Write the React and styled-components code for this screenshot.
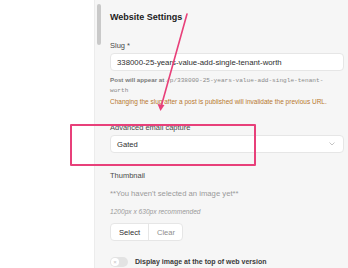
import React from "react";
import styled, { createGlobalStyle } from "styled-components";

const Global = createGlobalStyle`
  html, body { margin: 0; padding: 0; background: #ffffff; overflow: hidden; }
  body { font-family: "Liberation Sans", Arial, sans-serif; }
  * { box-sizing: border-box; }
`;

const Stage = styled.div`
  position: relative;
  width: 348px;
  height: 268px;
  overflow: hidden;
  display: flex;
  background: #ffffff;
`;

const Gutter = styled.div`
  width: 94px;
  flex: none;
`;

const Panel = styled.div`
  position: relative;
  flex: 1;
  background: #f6f6f6;
  border-left: 1px solid #ececec;
  padding: 10px 4px 0 15px;
  display: flex;
  flex-direction: column;
`;

const ScrollThumb = styled.div`
  position: absolute;
  left: 2px;
  top: 4px;
  width: 4px;
  height: 41px;
  border-radius: 2px;
  background: #c9c9c9;
`;

const Title = styled.div`
  font-size: 9px;
  line-height: 15px;
  font-weight: 700;
  color: #1c1c1c;
`;

const Label = styled.div`
  margin-top: ${(p) => p.$mt || 0}px;
  font-size: 7.5px;
  line-height: 12px;
  color: #4a4a4a;
`;

const Field = styled.div`
  margin-top: 1px;
  height: 19px;
  background: #ffffff;
  border: 1px solid #e6e6e6;
  border-radius: 4px;
  display: flex;
  align-items: center;
  justify-content: space-between;
  padding: 0 8px 0 6px;
  font-size: ${(p) => p.$size || 7.6}px;
  color: #2e2e2e;
`;

const Help = styled.div`
  margin-top: 3.5px;
  font-size: 6.2px;
  line-height: 9px;
  font-weight: 700;
  color: #7a7a7a;
`;

const Mono = styled.span`
  font-family: "Liberation Mono", "DejaVu Sans Mono", monospace;
  font-weight: 400;
  font-size: 6.1px;
  color: #8a8a8a;
`;

const Warning = styled.div`
  margin-top: 2.5px;
  font-size: 6.5px;
  line-height: 10px;
  color: #b7782e;
`;

const Muted = styled.div`
  margin-top: ${(p) => p.$mt}px;
  font-size: ${(p) => p.$size}px;
  line-height: ${(p) => p.$lh}px;
  font-style: ${(p) => (p.$italic ? "italic" : "normal")};
  color: #9a9a9a;
`;

const BtnGroup = styled.div`
  margin-top: 7.5px;
  display: flex;
  width: 73px;
  height: 19px;
  background: #ffffff;
  border: 1px solid #e6e6e6;
  border-radius: 4px;
`;

const Btn = styled.div`
  flex: ${(p) => p.$w}px 0 0;
  display: flex;
  align-items: center;
  justify-content: center;
  font-size: 7.6px;
  color: ${(p) => (p.$primary ? "#2e2e2e" : "#8e8e8e")};
  border-left: ${(p) => (p.$divider ? "1px solid #e6e6e6" : "none")};
`;

const ToggleRow = styled.div`
  margin-top: 15px;
  display: flex;
  align-items: center;
  gap: 7px;
`;

const Toggle = styled.div`
  position: relative;
  width: 18px;
  height: 10px;
  border-radius: 5px;
  background: #e3e3e3;
  flex: none;
`;

const Knob = styled.div`
  position: absolute;
  left: 1px;
  top: 1px;
  width: 8px;
  height: 8px;
  border-radius: 50%;
  background: #ffffff;
  display: flex;
  align-items: center;
  justify-content: center;
  font-size: 6px;
  line-height: 1;
  color: #c2c2c2;
`;

const ToggleText = styled.span`
  font-size: 7px;
  line-height: 12px;
  font-weight: 700;
  color: #3a3a3a;
`;

const Highlight = styled.div`
  position: absolute;
  left: 70px;
  top: 124px;
  width: 186px;
  height: 42px;
  border: 2px solid #e8407a;
  border-radius: 1px;
  pointer-events: none;
`;

const Arrow = styled.svg`
  position: absolute;
  left: 0;
  top: 0;
  pointer-events: none;
`;

export default function App() {
  return (
    <>
      <Global />
      <Stage>
        <Gutter />
        <Panel>
          <ScrollThumb />
          <Title>Website Settings</Title>
          <Label $mt={15}>Slug *</Label>
          <Field $size={7.8}>338000-25-years-value-add-single-tenant-worth</Field>
          <Help>
            Post will appear at <Mono>/p/338000-25-years-value-add-single-tenant-</Mono>
            <br />
            <Mono>worth</Mono>
          </Help>
          <Warning>
            Changing the slug after a post is published will invalidate the previous URL.
          </Warning>
          <Label $mt={15}>Advanced email capture</Label>
          <Field>
            <span>Gated</span>
            <svg width="6" height="4" viewBox="0 0 6 4">
              <path d="M0.5 0.5 L3 3 L5.5 0.5" fill="none" stroke="#b5b5b5" strokeWidth="0.8" />
            </svg>
          </Field>
          <Label $mt={16.5}>Thumbnail</Label>
          <Muted $mt={7.5} $size={7.7} $lh={10}>
            **You haven't selected an image yet**
          </Muted>
          <Muted $mt={7.5} $size={6.6} $lh={9} $italic>
            1200px x 630px recommended
          </Muted>
          <BtnGroup>
            <Btn $w={37} $primary>Select</Btn>
            <Btn $w={35} $divider>Clear</Btn>
          </BtnGroup>
          <ToggleRow>
            <Toggle>
              <Knob>×</Knob>
            </Toggle>
            <ToggleText>Display image at the top of web version</ToggleText>
          </ToggleRow>
        </Panel>
        <Highlight />
        <Arrow width="348" height="268" viewBox="0 0 348 268">
          <line x1="187" y1="14" x2="161" y2="107" stroke="#e8407a" strokeWidth="1.6" strokeLinecap="round" />
          <path d="M157.5 104 L160.5 111 L164.5 105 Z" fill="#e8407a" />
        </Arrow>
      </Stage>
    </>
  );
}
